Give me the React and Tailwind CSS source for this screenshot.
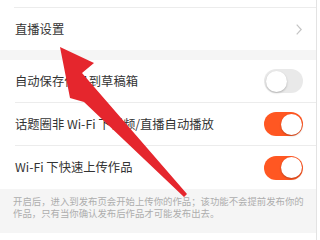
const font = { fontFamily: '"Noto Sans CJK SC", "Noto Sans", sans-serif' };

function Toggle({ on }) {
  return (
    <div
      className={`w-[39px] h-[24px] rounded-full p-[1.5px] flex ${
        on ? "bg-[#ff5722] justify-end" : "bg-[#e9e9e9] justify-start"
      }`}
    >
      <div className="w-[21px] h-[21px] rounded-full bg-white shadow-[0_1px_2px_rgba(0,0,0,0.25)]" />
    </div>
  );
}

function Row({ label, on, last }) {
  return (
    <div className={`h-[43px] flex items-center justify-between pr-[13px] ${last ? "" : "border-b border-[#ececec]"}`}>
      <span className="text-[12.3px] text-[#333]">{label}</span>
      <Toggle on={on} />
    </div>
  );
}

export default function App() {
  return (
    <div className="w-[320px] h-[240px] overflow-hidden relative bg-white" style={font}>
      <div className="w-[317px] h-full border-r border-[#e3e3e3] flex flex-col">
        {/* Live settings */}
        <div className="pl-[14px] pt-[7px]">
          <div className="h-[43px] flex items-center justify-between border-t border-[#ececec] pr-[14px]">
            <span className="text-[12.3px] text-[#333] pl-[1px]">直播设置</span>
            <svg width="6" height="11" viewBox="0 0 6 11" className="text-[#c4c4c4]">
              <polyline points="0.7,0.7 5.2,5.5 0.7,10.3" fill="none" stroke="currentColor" strokeWidth="1.2" />
            </svg>
          </div>
        </div>

        <div className="h-[10px] bg-[#f5f5f5]" />

        {/* Switches */}
        <div className="pl-[15px]">
          <Row label="自动保存作品到草稿箱" on={false} />
          <Row label="话题圈非 Wi-Fi 下视频/直播自动播放" on />
          <Row label="Wi-Fi 下快速上传作品" on last />
        </div>

        <div className="h-[44px] bg-[#f5f5f5] px-[13px] pt-[6px] text-[9.4px] leading-[12px] text-[#adadad]">
          <p className="whitespace-nowrap">开启后，进入到发布页会开始上传你的作品；该功能不会提前发布你的</p>
          <p>作品，只有当你确认发布后作品才可能发布出去。</p>
        </div>
      </div>

      {/* Annotation arrow */}
      <svg className="absolute left-0 top-0" width="320" height="240" viewBox="0 0 320 240">
        <polygon
          points="60,47 94,63 82,73 187,194 184,197 84,102 70,98"
          fill="#e5262d"
        />
      </svg>
    </div>
  );
}
